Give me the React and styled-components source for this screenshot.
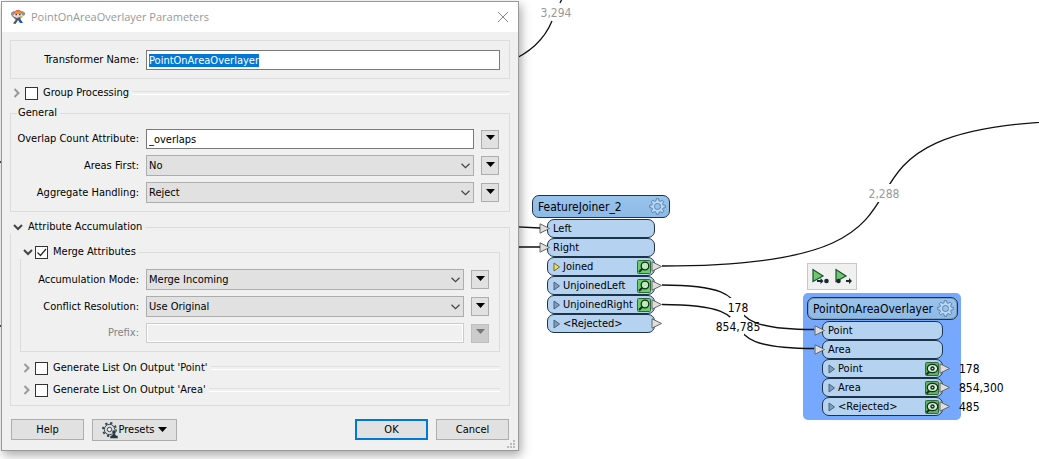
import React, { useEffect, useRef } from 'react';
import styled, { createGlobalStyle } from 'styled-components';

const GlobalStyle = createGlobalStyle`
  * {
    box-sizing: border-box;
  }

  body {
    margin: 0;
    background: #fff;
    color: #000;
    font-family: 'DejaVu Sans Condensed', 'DejaVu Sans', sans-serif;
    font-size: 11px;
    line-height: 14px;
  }

  button,
  input,
  select {
    font: inherit;
    color: inherit;
    margin: 0;
  }
`;

/* ---------- workspace canvas ---------- */

const Canvas = styled.main`
  position: relative;
  min-height: 100vh;
  overflow: hidden;
`;

const Edges = styled.svg`
  position: absolute;
  top: 0;
  left: 0;
  width: 100%;
  height: 100%;
  fill: none;
  stroke: #111;
  stroke-width: 1.3;
  pointer-events: none;

  rect {
    fill: #fff;
    stroke: none;
  }
`;

const Count = styled.span`
  position: absolute;
  left: ${(p) => p.$x}px;
  top: ${(p) => p.$y}px;
  font-size: 12px;
  color: ${(p) => (p.$muted ? '#999' : '#000')};
  transform: ${(p) => (p.$centered ? 'translate(-50%, -50%)' : 'translateY(-50%)')};
`;

const Node = styled.section`
  position: absolute;
  left: ${(p) => p.$x}px;
  top: ${(p) => p.$y}px;
  padding: 4px 3px 4px 4px;
  border-radius: 5px;
  background: ${(p) => (p.$selected ? '#76a9fd' : 'transparent')};
`;

const NodeHeader = styled.header`
  display: flex;
  align-items: center;
  justify-content: space-between;
  gap: 2px;
  min-width: ${(p) => p.$width}px;
  height: 23px;
  padding: 0 3px 0 5px;
  border: 1px solid #1d3347;
  border-radius: 7px;
  background: linear-gradient(#98c3ec, #8ebae7);
  box-shadow: ${(p) => (p.$selected ? 'inset 0 0 0 1px #7f9fbd' : 'none')};

  h2 {
    margin: 0;
    font-size: 12px;
    font-weight: normal;
  }

  button {
    display: flex;
    padding: 0;
    border: 0;
    background: none;
  }
`;

const Ports = styled.ul`
  list-style: none;
  margin: 1px 15px 0;
  padding: 0;
`;

const Port = styled.li`
  position: relative;
  display: flex;
  align-items: center;
  gap: 2px;
  height: 19px;
  padding: 0 3px 0 5px;
  border: 1px solid #1d3347;
  border-radius: 7px;
  background: #b5d3f1;

  .badge {
    margin-left: auto;
  }
`;

const Arrow = styled.svg`
  position: absolute;
  top: 3px;
  left: ${(p) => (p.$side === 'in' ? '-9px' : 'auto')};
  right: ${(p) => (p.$side === 'out' ? '-9px' : 'auto')};
  fill: #dedede;
  stroke: #666;
`;

const MiniToolbar = styled.div`
  position: absolute;
  left: 807px;
  top: 263px;
  display: flex;
  gap: 6px;
  padding: 4px;
  border: 1px solid #c8c8c8;
  background: #f0f0f0;

  button {
    display: flex;
    padding: 0;
    border: 0;
    background: none;
  }
`;

/* ---------- dialog ---------- */

const Dialog = styled.form`
  position: absolute;
  left: 1px;
  top: 1px;
  width: 518px;
  border: 1px solid #999;
  background: #f0f0f0;
  box-shadow: 2px 4px 10px rgba(0, 0, 0, 0.35);
`;

const TitleBar = styled.header`
  display: flex;
  align-items: center;
  gap: 5px;
  height: 30px;
  padding: 0 9px 0 8px;
  background: #fff;
  color: #999;

  h1 {
    flex: 1;
    margin: 0;
    font: 11px/16px 'Open Sans', sans-serif;
  }

  button {
    display: flex;
    padding: 0;
    border: 0;
    background: none;
  }
`;

const Body = styled.div`
  padding: 8px 8px 9px;
`;

const NameBox = styled.div`
  padding: 9px 9px 8px;
  border: 1px solid #dcdcdc;
`;

const Group = styled.fieldset`
  min-width: 0;
  margin: ${(p) => p.$margin || '0'};
  padding: ${(p) => p.$pad};
  border: 1px solid #dcdcdc;
`;

const Legend = styled.legend`
  display: flex;
  align-items: center;
  height: 14px;
  margin-left: ${(p) => (p.$flush ? -10 : -3)}px;
  padding: 0 3px 0 ${(p) => (p.$flush ? 2 : 1)}px;
  background: #f0f0f0;
`;

const Twisty = styled.button`
  display: flex;
  justify-content: center;
  width: ${(p) => p.$width || 11}px;
  padding: 0;
  border: 0;
  background: none;
`;

const CheckLabel = styled.label`
  display: flex;
  align-items: center;
  gap: 5px;
  margin-left: ${(p) => p.$indent || 2}px;
`;

const CheckBox = styled.input`
  appearance: none;
  width: 13px;
  height: 13px;
  border: 1px solid #333;
  background: #fff;

  &:checked {
    background: #fff
      url("data:image/svg+xml,%3Csvg xmlns='http://www.w3.org/2000/svg' viewBox='0 0 11 11'%3E%3Cpath d='M1.5 5.5l3 3 5.500-6.500' fill='none' stroke='%23222' stroke-width='1.200'/%3E%3C/svg%3E");
  }
`;

const Collapsed = styled.div`
  display: flex;
  align-items: center;
  height: 14px;
  margin: ${(p) => p.$margin};

  &::after {
    content: '';
    flex: 1;
    height: 2px;
    margin-left: 3px;
    border-top: 1px solid #e0e0e0;
    border-bottom: 1px solid #fff;
  }
`;

const Field = styled.div`
  display: grid;
  grid-template-columns: ${(p) => p.$label}px 1fr ${(p) => (p.$plain ? '' : '18px')};
  align-items: center;
  column-gap: 7px;
  color: ${(p) => (p.$disabled ? '#838383' : '#000')};

  & + & {
    margin-top: 6px;
  }

  > label {
    justify-self: end;
    white-space: nowrap;
  }
`;

const TextBox = styled.input`
  width: 100%;
  height: 20px;
  padding: 0 2px;
  border: 1px solid #7a7a7a;
  background: #fff;
  outline: 0;

  &::selection {
    background: #0078d7;
    color: #fff;
  }

  &:disabled {
    border-color: #ccc;
    background: #f0f0f0;
    box-shadow: inset 0 0 0 1px #fff;
  }
`;

const SelectWrap = styled.div`
  position: relative;

  select {
    appearance: none;
    display: block;
    width: 100%;
    height: 21px;
    padding: 0 20px 0 2px;
    border: 1px solid #adadad;
    border-radius: 0;
    background: #e1e1e1;
  }

  svg {
    position: absolute;
    top: 8px;
    right: 4px;
    pointer-events: none;
  }
`;

const DropButton = styled.button`
  display: flex;
  align-items: center;
  justify-content: center;
  width: 18px;
  height: 19px;
  padding: 0 0 3px;
  border: 1px solid #adadad;
  background: #e1e1e1;
  color: #000;

  &:disabled {
    border-color: #bfbfbf;
    background: #ccc;
    color: #777;
  }
`;

const Footer = styled.footer`
  display: flex;
  gap: 8px;
  padding: 13px 1px 0;

  .spacer {
    flex: 1;
  }
`;

const PushButton = styled.button`
  display: flex;
  align-items: center;
  justify-content: center;
  width: ${(p) => (p.$wide ? 85 : 73)}px;
  height: ${(p) => (p.$wide ? 22 : 21)}px;
  padding: 0;
  border: ${(p) => (p.$primary ? '2px solid #0078d7' : '1px solid #adadad')};
  background: #e1e1e1;

  .caret {
    margin: 0 0 1px 4px;
  }
`;

const Grip = styled.svg`
  position: absolute;
  right: 3px;
  bottom: 2px;
  fill: #bbb;
`;

/* ---------- icons ---------- */

const Caret = () => (
  <svg className="caret" width="9" height="5" viewBox="0 0 9 5">
    <path d="M0 0h9L4.500 5z" fill="currentColor" />
  </svg>
);

const ChevronDown = () => (
  <svg width="9" height="6" viewBox="0 0 9 6">
    <path d="M.5 .8L4.500 4.700 8.500 .8" fill="none" stroke="#444" strokeWidth="1.200" />
  </svg>
);

const TwistyIcon = ({ open }) =>
  open ? (
    <svg width="10" height="7" viewBox="0 0 10 7">
      <path d="M1 1l4 4 4-4" fill="none" stroke="#444" strokeWidth="2" />
    </svg>
  ) : (
    <svg width="7" height="10" viewBox="0 0 7 10">
      <path d="M1.500 1l4 4-4 4" fill="none" stroke="#999" strokeWidth="2" />
    </svg>
  );

const AppIcon = () => (
  <svg width="16" height="16" viewBox="0 0 16 16">
    <path d="M1 3.500L4 2l1 3-2 2-2-1zM15 3.500L12 2l-1 3 2 2 2-1z" fill="#99938b" />
    <path d="M4 3c1-2.500 7-2.500 8 0l-1 2H5z" fill="#e0301e" />
    <path d="M5 2.500h6v1.200H5z" fill="#f6c33c" />
    <path d="M4.500 4.500h7v2.500l-2 2h-3l-2-2z" fill="#e6d6cc" />
    <path d="M5.500 5h1.500v1.200H5.500zM9 5h1.500v1.200H9z" fill="#444" />
    <path d="M1 6l6 3 5-2-2 3.500-4 .5z" fill="#6d6765" />
    <path d="M3 14.500l4-5.500 1.500 1.500L5.500 15z" fill="#5c5652" />
    <path d="M7 9.500h3l3 4.500h-3z" fill="#1d57b8" />
    <path d="M10 8l2-1.500 1 1.500-2 1.500z" fill="#eac13d" />
  </svg>
);

const CloseIcon = () => (
  <svg width="12" height="12" viewBox="0 0 12 12">
    <path d="M1 1l10 10M11 1L1 11" stroke="#888" />
  </svg>
);

const Gear = () => (
  <svg width="17" height="17" viewBox="-9 -9 18 18">
    <g fill="#b9d6f3" stroke="#5580a8" strokeLinejoin="round">
      <path d="M-1.200 -8.300h2.400l.4 2.300 1.500.6L5 -6.700l1.700 1.700L5.400 -3.100l.6 1.500 2.300.4v2.400L6 1.600 5.400 3.100 6.700 5 5 6.700 3.100 5.400 1.600 6 1.200 8.300h-2.400L-1.600 6-3.100 5.400-5 6.700-6.700 5-5.400 3.100-6 1.600-8.300 1.200v-2.400L-6-1.600-5.400-3.100-6.700-5-5-6.700-3.100-5.400-1.600-6z" />
      <circle r="3.200" fill="#98c3ec" />
    </g>
  </svg>
);

const PresetsIcon = () => (
  <svg width="17" height="17" viewBox="0 0 17 17">
    <circle cx="7.500" cy="7.500" r="6.500" fill="none" stroke="#36474f" strokeWidth="2" strokeDasharray="2.300 2.784" />
    <circle cx="7.500" cy="7.500" r="5.200" fill="#d5dadd" stroke="#36474f" strokeWidth="1" />
    <circle cx="7.500" cy="7.500" r="2.200" fill="#eee" stroke="#36474f" />
    <path d="M12 8a2 2 0 0 1 1.300 3.500l.4 1.500 2.300 1v2.500H8V14l2.300-1 .4-1.500A2 2 0 0 1 12 8z" fill="#263740" stroke="#e1e1e1" strokeWidth=".5" />
  </svg>
);

const Expander = ({ active }) => (
  <svg width="8" height="10" viewBox="0 0 8 10">
    <path d="M1 1l5.500 4L1 9z" fill={active ? '#f4e04d' : '#7e9fbe'} stroke={active ? '#6c6a3a' : '#48627a'} />
  </svg>
);

const InspectBadge = ({ eye }) => (
  <svg className="badge" width="14" height="14" viewBox="0 0 14 14">
    <rect x=".5" y=".5" width="13" height="13" rx="1" fill={eye ? '#5fb35f' : '#6ccb6a'} stroke="#2f6a3a" />
    {eye ? (
      <>
        <path d="M1.500 12.500l3-3" stroke="#12301c" strokeWidth="2" />
        <ellipse cx="7.500" cy="6.500" rx="5.200" ry="4.200" fill="#d9f2da" stroke="#12301c" strokeWidth="1.300" />
        <circle cx="7.500" cy="6.500" r="2.200" fill="#12301c" />
        <circle cx="7.500" cy="6.500" r=".8" fill="#d9f2da" />
      </>
    ) : (
      <>
        <path d="M2 12l3.500-3.500" stroke="#12301c" strokeWidth="2" />
        <circle cx="8" cy="6" r="3.800" fill="#bfe8bd" stroke="#12301c" strokeWidth="1.300" />
      </>
    )}
  </svg>
);

const PortArrow = ({ side }) => (
  <Arrow $side={side} width="12" height="11" viewBox="0 0 12 11">
    <path d="M1 .8l9.500 4.700L1 10.200z" />
  </Arrow>
);

const RunTo = ({ from }) => (
  <svg width="17" height="17" viewBox="0 0 17 17">
    <path d="M1 1.500v12L11 8z" fill="#6cc96b" stroke="#1c5130" strokeWidth="1.200" />
    {from ? (
      <g fill="#17282f">
        <circle cx="3.500" cy="13" r="2.300" />
        <path d="M11 12h3v-2l3 3-3 3v-2h-3z" />
      </g>
    ) : (
      <g fill="#17282f">
        <path d="M5 12h3.500v-2l3 3-3 3v-2H5z" />
        <circle cx="14.500" cy="13" r="2.300" />
      </g>
    )}
  </svg>
);

/* ---------- pieces ---------- */

const SelectField = ({ id, label, labelWidth, value }) => (
  <Field $label={labelWidth}>
    <label htmlFor={id}>{label}</label>
    <SelectWrap>
      <select id={id} defaultValue={value}>
        <option>{value}</option>
      </select>
      <ChevronDown />
    </SelectWrap>
    <DropButton type="button" aria-label={`${label} options`}>
      <Caret />
    </DropButton>
  </Field>
);

const CollapsedOption = ({ label, margin }) => (
  <Collapsed $margin={margin}>
    <Twisty type="button" aria-label="Expand" $width={13}>
      <TwistyIcon />
    </Twisty>
    <CheckLabel>
      <CheckBox type="checkbox" />
      {label}
    </CheckLabel>
  </Collapsed>
);

const TransformerNode = ({ x, y, width, name, selected, inputs, outputs }) => (
  <Node $x={x} $y={y} $selected={selected}>
    <NodeHeader $selected={selected} $width={width}>
      <h2>{name}</h2>
      <button type="button" aria-label={`${name} settings`}>
        <Gear />
      </button>
    </NodeHeader>
    <Ports>
      {inputs.map((label) => (
        <Port key={label}>
          <PortArrow side="in" />
          {label}
        </Port>
      ))}
      {outputs.map((port) => (
        <Port key={port.label}>
          <Expander active={port.active} />
          {port.label}
          {port.badge && <InspectBadge eye={port.badge === 'eye'} />}
          <PortArrow side="out" />
        </Port>
      ))}
    </Ports>
  </Node>
);

const ParametersDialog = () => {
  const nameRef = useRef(null);

  useEffect(() => {
    nameRef.current.focus();
    nameRef.current.select();
  }, []);

  return (
    <Dialog onSubmit={(e) => e.preventDefault()}>
      <TitleBar>
        <AppIcon />
        <h1>PointOnAreaOverlayer Parameters</h1>
        <button type="button" aria-label="Close">
          <CloseIcon />
        </button>
      </TitleBar>
      <Body>
        <NameBox>
          <Field $label={119} $plain>
            <label htmlFor="name">Transformer Name:</label>
            <TextBox id="name" ref={nameRef} defaultValue="PointOnAreaOverlayer" spellCheck={false} />
          </Field>
        </NameBox>

        <CollapsedOption label="Group Processing" margin="7px 0 6px" />

        <Group $pad="9px 10px 8px 9px">
          <Legend>General</Legend>
          <Field $label={119}>
            <label htmlFor="overlap">Overlap Count Attribute:</label>
            <TextBox id="overlap" defaultValue="_overlaps" spellCheck={false} />
            <DropButton type="button" aria-label="Overlap options">
              <Caret />
            </DropButton>
          </Field>
          <SelectField id="areas" label="Areas First:" labelWidth={119} value="No" />
          <SelectField id="aggregate" label="Aggregate Handling:" labelWidth={119} value="Reject" />
        </Group>

        <Group $margin="8px 0 0" $pad="0 9px 8px">
          <Legend $flush>
            <Twisty type="button" aria-label="Collapse">
              <TwistyIcon open />
            </Twisty>
            <CheckLabel as="span" $indent={5}>
              Attribute Accumulation
            </CheckLabel>
          </Legend>
          <Group $margin="11px 0 0" $pad="10px 10px 8px 9px">
            <Legend $flush>
              <Twisty type="button" aria-label="Collapse">
                <TwistyIcon open />
              </Twisty>
              <CheckLabel>
                <CheckBox type="checkbox" defaultChecked />
                Merge Attributes
              </CheckLabel>
            </Legend>
            <SelectField id="mode" label="Accumulation Mode:" labelWidth={109} value="Merge Incoming" />
            <SelectField id="conflict" label="Conflict Resolution:" labelWidth={109} value="Use Original" />
            <Field $label={109} $disabled>
              <label htmlFor="prefix">Prefix:</label>
              <TextBox id="prefix" disabled />
              <DropButton type="button" disabled aria-label="Prefix options">
                <Caret />
              </DropButton>
            </Field>
          </Group>
          <CollapsedOption label="Generate List On Output 'Point'" margin="9px 0 0" />
          <CollapsedOption label="Generate List On Output 'Area'" margin="8px 0 0" />
        </Group>

        <Footer>
          <PushButton type="button">Help</PushButton>
          <PushButton type="button" $wide>
            <PresetsIcon />
            Presets
            <Caret />
          </PushButton>
          <span className="spacer" />
          <PushButton type="submit" $primary>
            OK
          </PushButton>
          <PushButton type="button">Cancel</PushButton>
        </Footer>
      </Body>
      <Grip width="8" height="8" viewBox="0 0 8 8">
        <path d="M6 0h2v2H6zM3 3h2v2H3zM6 3h2v2H6zM0 6h2v2H0zM3 6h2v2H3zM6 6h2v2H6z" />
      </Grip>
    </Dialog>
  );
};

const App = () => {
  return (
    <>
      <GlobalStyle />
      <Canvas>
        <TransformerNode
          x={528}
          y={191}
          width={138}
          name="FeatureJoiner_2"
          inputs={['Left', 'Right']}
          outputs={[
            { label: 'Joined', active: true, badge: 'lens' },
            { label: 'UnjoinedLeft', badge: 'lens' },
            { label: 'UnjoinedRight', badge: 'lens' },
            { label: '<Rejected>' },
          ]}
        />
        <TransformerNode
          x={803}
          y={293}
          width={151}
          name="PointOnAreaOverlayer"
          selected
          inputs={['Point', 'Area']}
          outputs={[
            { label: 'Point', badge: 'eye' },
            { label: 'Area', badge: 'eye' },
            { label: '<Rejected>', badge: 'eye' },
          ]}
        />

        <Edges>
          <path d="M0 162h4M0 326h4" />
          <path d="M500 65C530 55 545 38 552 21M560 3l2-4" />
          <path d="M500 226l40 2M500 247h40" />
          <path d="M662 266C1020 266 748 120 1108 120" />
          <path d="M662 285C786 285 690 329.500 814 329.500" />
          <path d="M662 304.500C786 304.500 690 348.500 814 348.500" />
          <rect x="876" y="184" width="16" height="18" />
          <rect x="730" y="298" width="14" height="18" />
          <rect x="730" y="317" width="14" height="18" />
        </Edges>

        <Count $x={556} $y={13} $muted $centered>3,294</Count>
        <Count $x={884} $y={194} $muted $centered>2,288</Count>
        <Count $x={738} $y={308} $centered>178</Count>
        <Count $x={738} $y={327} $centered>854,785</Count>
        <Count $x={959} $y={369}>178</Count>
        <Count $x={959} $y={388}>854,300</Count>
        <Count $x={959} $y={407}>485</Count>

        <MiniToolbar>
          <button type="button" aria-label="Run to this">
            <RunTo />
          </button>
          <button type="button" aria-label="Run from this">
            <RunTo from />
          </button>
        </MiniToolbar>

        <ParametersDialog />
      </Canvas>
    </>
  );
};

export default App;
